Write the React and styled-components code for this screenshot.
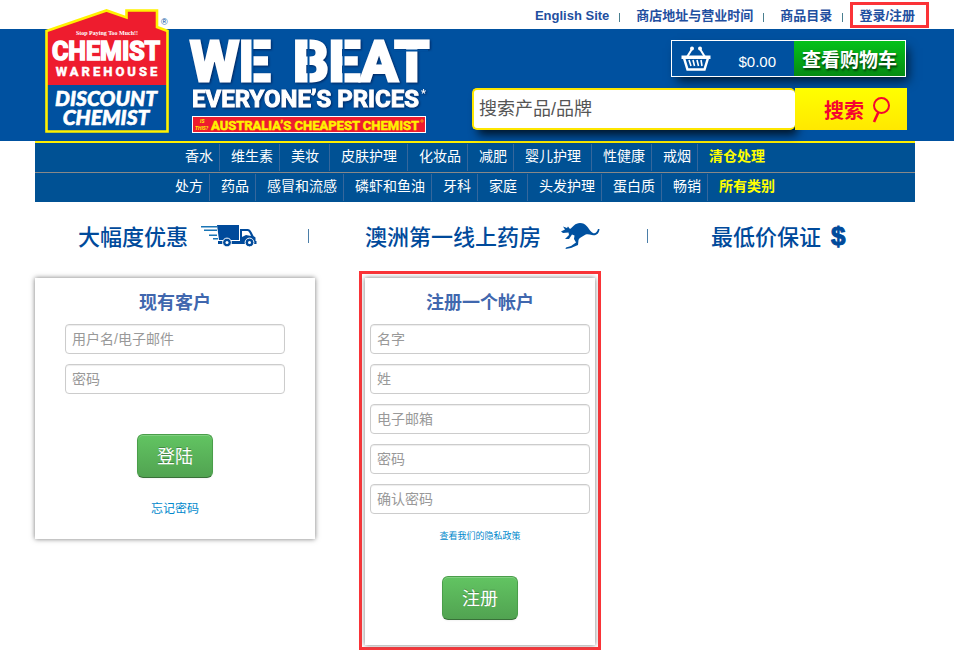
import React, { useState } from "react";
import styled, { createGlobalStyle } from "styled-components";

const GlobalStyle = createGlobalStyle`
    * {
        box-sizing: border-box;
    }

    body {
        margin: 0;
        background: #fff;
        font-family: "Liberation Sans", "Noto Sans CJK SC", sans-serif;
    }

    a {
        text-decoration: none;
    }
`;

/* header */

const Header = styled.header`
    display: flex;
    padding: 0 25px 8px 45px;
    background: linear-gradient(#fff 29px, #0051a0 29px);
`;

const Brand = styled.a`
    display: flex;
    align-items: flex-end;
    flex: none;
    gap: 14px;
    padding-top: 9px;
    margin-right: 39px;

    svg {
        display: block;
    }
`;

const HeaderTools = styled.div`
    flex: 1;
    min-width: 0;
`;

const TopLinks = styled.nav`
    display: flex;
    justify-content: flex-end;
    align-items: center;
    height: 29px;
    white-space: nowrap;
`;

const TopLink = styled.a`
    padding-top: 3px;
    color: #1f4fa0;
    font-size: 13px;
    line-height: 20px;
    font-weight: bold;

    & + &::before {
        content: "";
        display: inline-block;
        width: 1px;
        height: 9px;
        margin: 0 16px -2px 10px;
        background: #4a7f8f;
    }
`;

const LoginLink = styled.a`
    padding: 2px 11px 0 6px;
    border: 3px solid #fb3337;
    color: #1f4fa0;
    font-size: 13px;
    line-height: 18px;
    font-weight: bold;
`;

const Divider = styled.span`
    width: 1px;
    height: 9px;
    margin: 6px 7px 0 10px;
    background: #4a7f8f;
`;

const Cart = styled.div`
    display: flex;
    align-items: center;
    width: 235px;
    height: 37px;
    margin: 11px 23px 11px auto;
    border: 1px solid #fff;
    box-shadow: 4px 6px 10px -2px rgba(0, 0, 0, 0.7);

    svg {
        margin-left: 9px;
    }
`;

const CartTotal = styled.span`
    flex: 1;
    padding: 6px 18px 0 0;
    color: #fff;
    font-size: 15px;
    text-align: right;
`;

const CartButton = styled.button`
    width: 111px;
    height: 35px;
    padding: 0;
    border: none;
    background: linear-gradient(#04c21a, #068b12);
    color: #fff;
    font: bold 19px/33px "Noto Sans CJK SC", sans-serif;
    text-shadow: 1px 2px 2px rgba(0, 0, 0, 0.6);
    cursor: pointer;
`;

const Search = styled.form`
    display: flex;
    height: 42px;
    margin-right: 22px;
`;

const SearchInput = styled.input`
    flex: 1;
    min-width: 0;
    padding: 0 5px;
    border: 2px solid #fee600;
    border-right-width: 0;
    border-radius: 5px;
    background: #fff;
    box-shadow: 4px 7px 10px -2px rgba(0, 0, 0, 0.75);
    color: #555;
    font: 18px "Liberation Sans", "Noto Sans CJK SC", sans-serif;

    &::placeholder {
        color: #555;
        opacity: 1;
    }
`;

const SearchButton = styled.button`
    display: flex;
    align-items: center;
    justify-content: center;
    gap: 8px;
    width: 112px;
    padding: 2px 0 0 12px;
    border: none;
    background: linear-gradient(#ffff00, #ffe800);
    color: #f5052f;
    font: bold 20px/40px "Noto Sans CJK SC", sans-serif;
    cursor: pointer;
`;

/* content column */

const Container = styled.main`
    padding: 0 39px 0 35px;
`;

const Menu = styled.nav`
    border-top: 2px solid #ffee00;
    background: #005194;
`;

const MenuRow = styled.div`
    display: flex;
    justify-content: center;
    height: 29px;
    padding: 1px 0;

    & + & {
        height: 30px;
        border-top: 1px solid #888;
    }
`;

const MenuItem = styled.a`
    padding: 0 ${({ $loose }) => ($loose ? 10 : 6)}px 0 11px;
    border-right: 1px solid #36679c;
    color: #fff;
    font-size: 14px;
    line-height: 25px;
    white-space: nowrap;

    &:last-child {
        padding-right: 11px;
        border-right: none;
        color: #ffff00;
        font-weight: bold;
    }
`;

const Promos = styled.div`
    display: grid;
    grid-template-columns: 273fr 339fr 268fr;
    align-items: center;
    height: 69px;
    padding-bottom: 2px;
`;

const Promo = styled.div`
    display: flex;
    align-items: center;
    gap: 13px;
    height: 26px;
    padding-left: ${({ $indent }) => $indent}px;
    color: #004a9b;
    font: 500 22px/24px "Noto Sans CJK SC", sans-serif;
    white-space: nowrap;

    & + & {
        background: linear-gradient(#4b7ea8, #4b7ea8) left center / 1px 14px no-repeat;
    }
`;

const PromoText = styled.span`
    padding-bottom: 2px;
`;

const Dollar = styled.span`
    margin-left: -3px;
    font: bold 26px/26px "Liberation Sans", sans-serif;
    -webkit-text-stroke: 1px #004a9b;
`;

const Forms = styled.div`
    display: flex;
    align-items: flex-start;
    gap: 44px;
`;

const Highlight = styled.div`
    padding: 4px 3px 2px;
    border: 3px solid #fb3337;
`;

const Card = styled.form`
    display: flex;
    flex-direction: column;
    align-items: center;
    gap: 10px;
    padding: 15px 5px 25px;
    background: #fff;
    box-shadow: 0 0 5px #777;
`;

const LoginCard = styled(Card)`
    margin-top: 7px;
    padding: 15px 30px 19px;
`;

const CardTitle = styled.h2`
    margin: 0;
    color: #4067ae;
    font-size: 18px;
    line-height: 21px;
`;

const Input = styled.input`
    width: 220px;
    height: 30px;
    padding: 0 6px;
    border: 1px solid #ccc;
    border-radius: 4px;
    box-shadow: inset 0 1px 1px rgba(0, 0, 0, 0.075);
    color: #555;
    font: 14px "Liberation Sans", "Noto Sans CJK SC", sans-serif;

    &::placeholder {
        color: #999;
        opacity: 1;
    }
`;

const SubmitButton = styled.button`
    height: 44px;
    margin-top: ${({ $space }) => $space}px;
    padding: 0 19px 2px;
    border: 1px solid #4a9e4a;
    border-bottom-color: #387038;
    border-radius: 6px;
    background: linear-gradient(#62c462, #51a351);
    box-shadow: inset 0 1px 0 rgba(255, 255, 255, 0.2), 0 1px 2px rgba(0, 0, 0, 0.05);
    color: #fff;
    font: 18px "Noto Sans CJK SC", sans-serif;
    text-shadow: 0 -1px 0 rgba(0, 0, 0, 0.25);
    cursor: pointer;
`;

const ForgotLink = styled.a`
    margin-top: 10px;
    color: #0088cc;
    font-size: 12px;
    line-height: 22px;
`;

const PolicyLink = styled.a`
    color: #0088cc;
    font-size: 9px;
    line-height: 24px;
`;

const Logo = () => (
    <svg width="130" height="124" viewBox="45 9 130 124">
        <path d="M46.5 31 L106.5 10.5 L126.5 17.5 V10.5 H157 V27 L167.5 31 V85 H46.5 Z" fill="#ee1c2e" />
        <path d="M46.5 85 H167.5 V131.5 H46.5 Z" fill="#0051a0" />
        <path
            d="M46.5 31 L106.5 10.5 L126.5 17.5 V10.5 H157 V27 L167.5 31 V131.5 H46.5 Z"
            fill="none"
            stroke="#fff200"
            strokeWidth="2.6"
        />
        <g fill="#fff" stroke="#fff" fontWeight="bold" textAnchor="middle">
            <text x="107" y="35" fontSize="6" stroke="none" fontFamily="Liberation Serif, serif">
                Stop Paying Too Much!!
            </text>
            <text x="106" y="60" fontSize="25" strokeWidth="1.6" fontFamily="Roboto, sans-serif">
                CHEMIST
            </text>
            <text x="108" y="76" fontSize="13" strokeWidth="0.5" letterSpacing="3" fontFamily="Roboto, sans-serif">
                WAREHOUSE
            </text>
            <g fontFamily="Lato, sans-serif" fontStyle="italic" fontWeight="900" fontSize="21" strokeWidth="0.6">
                <text x="106" y="106">DISCOUNT</text>
                <text x="106" y="125">CHEMIST</text>
            </g>
        </g>
        <text x="161" y="25" fontSize="9" fill="#0051a0" fontFamily="Liberation Sans, sans-serif">
            ®
        </text>
    </svg>
);

const SloganArt = styled.svg`
    font-family: Roboto, sans-serif;
    font-weight: bold;

    .headline {
        fill: #fff;
        stroke: #fff;
        filter: drop-shadow(1px 1px 1px rgba(0, 20, 70, 0.7));
    }

    .banner {
        fill: #fff200;
    }
`;

const Slogan = () => (
    <SloganArt width="244" height="124" viewBox="189 9 244 124">
        <g className="headline">
            <text x="190" y="81" fontSize="56" strokeWidth="3">WE</text>
            <text x="293" y="81" fontSize="56" strokeWidth="3">BEAT</text>
            <text x="192" y="107" fontSize="24" strokeWidth="1">EVERYONE’S PRICES</text>
            <text x="421" y="97" fontSize="11" stroke="none">*</text>
        </g>
        {/* stencil cuts */}
        <path d="M252.5 36 V84 M308.5 36 V84 M343.5 36 V84 M394 50.5 H428" stroke="#0051a0" strokeWidth="2" />
        <rect x="192.5" y="116.5" width="233" height="16" fill="#ee1c2e" stroke="#fff" />
        <g className="banner">
            <text x="200" y="123" fontSize="5" fontStyle="italic">IS</text>
            <text x="195" y="130" fontSize="5" fontStyle="italic">THIS?</text>
            <text x="211" y="130" fontSize="13" stroke="#fff200" strokeWidth="0.5">
                AUSTRALIA’S CHEAPEST CHEMIST
            </text>
            <circle cx="422" cy="121" r="1.2" fill="none" stroke="#fff200" strokeWidth="0.6" />
        </g>
    </SloganArt>
);

const BasketIcon = () => (
    <svg width="30" height="26" viewBox="0 0 30 26" fill="none" stroke="#fff">
        <path d="M6 11 L11 3 M24 11 L19 3" strokeWidth="2" />
        <circle cx="11" cy="2.5" r="2" fill="#fff" stroke="none" />
        <circle cx="19" cy="2.5" r="2" fill="#fff" stroke="none" />
        <path d="M0.5 9.5 H29.5 V13 H0.5 Z" fill="#fff" stroke="none" />
        <path d="M3 12 L6.5 23.5 H23.5 L27 12" strokeWidth="2.5" />
        <path d="M8 14 L10 20 M12 14 L13.5 20 M16 14 L17.5 20 M20 14 L21 20" strokeWidth="1.6" />
    </svg>
);

const SearchIcon = () => (
    <svg width="18" height="26" viewBox="0 0 18 26" fill="none" stroke="#f5052f">
        <circle cx="9.5" cy="8.5" r="7.5" strokeWidth="2" />
        <path d="M6.5 15 L2 25" strokeWidth="2.6" />
    </svg>
);

const TruckIcon = () => (
    <svg width="56" height="22" viewBox="0 0 56 22" fill="#004a9b">
        <path d="M0 1 H16 V2.5 H0 Z M3 4.5 H16 V6 H3 Z M8 9.5 H16 V11 H8 Z M12 13 H17 V14.5 H12 Z" fill="#1a75b5" />
        <path d="M16 0 H38 V15 H18 Z" />
        <path d="M39 4 H47 Q49 4 50.5 7 L52.5 11 L54.5 12.5 V16 H39 Z" />
        <path d="M41 6 H46.5 Q48 6 50 11 L45 10 L41 12 Z" fill="#fff" />
        <path d="M17 16 H55.5 V19 H17 Z" />
        <g stroke="#fff" strokeWidth="1">
            <circle cx="26" cy="17.5" r="4.4" />
            <circle cx="48.5" cy="17.5" r="4.4" />
        </g>
        <circle cx="26" cy="17.5" r="1.5" fill="#fff" />
        <circle cx="48.5" cy="17.5" r="1.5" fill="#fff" />
    </svg>
);

const KangarooIcon = () => (
    <svg width="46" height="28" viewBox="-7 0 46 28" fill="#0051a0">
        <path d="M0 9.5 L4 7.5 L2 4.5 L6 6 L7 4.5 L9 7 C12 5 14 1 19 1 C25 1 27 6 30 9.5 C33 13 36 11 37 7 L38.5 7 C38 12 35 14 31 13 C27 12 25 12 23 13.5 C20 15.5 18 16 17.5 18 L17 23 L10 26 L4.5 27 L5 25.5 L10 24 L15 20.5 L13 17 L13.5 13.5 L11 12.5 L8 17 L4 17 L8 13 L7.5 10.5 L2 11 Z" />
    </svg>
);

const menuRows = [
    [["香水"], ["维生素"], ["美妆", true], ["皮肤护理", true], ["化妆品"], ["减肥"], ["婴儿护理", true], ["性健康"], ["戒烟"], ["清仓处理"]],
    [["处方"], ["药品"], ["感冒和流感"], ["磷虾和鱼油"], ["牙科"], ["家庭", true], ["头发护理"], ["蛋白质"], ["畅销"], ["所有类别"]],
];

const loginFields = [
    { name: "username", label: "用户名/电子邮件", type: "text" },
    { name: "password", label: "密码", type: "password" },
];

const registerFields = [
    { name: "firstName", label: "名字", type: "text" },
    { name: "lastName", label: "姓", type: "text" },
    { name: "email", label: "电子邮箱", type: "email" },
    { name: "newPassword", label: "密码", type: "password" },
    { name: "confirmPassword", label: "确认密码", type: "password" },
];

const Fields = ({ fields }) => {
    const [values, setValues] = useState({});

    return fields.map(({ name, label, type }) => (
        <Input
            key={name}
            name={name}
            type={type}
            placeholder={label}
            aria-label={label}
            value={values[name] || ""}
            onChange={(e) => setValues({ ...values, [name]: e.target.value })}
        />
    ));
};

const App = () => {
    const handleSubmit = (e) => e.preventDefault();

    return (
        <>
            <GlobalStyle />
            <Header>
                <Brand href="#" aria-label="Chemist Warehouse">
                    <Logo />
                    <Slogan />
                </Brand>
                <HeaderTools>
                    <TopLinks>
                        <TopLink href="#">English Site</TopLink>
                        <TopLink href="#">商店地址与营业时间</TopLink>
                        <TopLink href="#">商品目录</TopLink>
                        <Divider />
                        <LoginLink href="#">登录/注册</LoginLink>
                    </TopLinks>
                    <Cart>
                        <BasketIcon />
                        <CartTotal>$0.00</CartTotal>
                        <CartButton type="button">查看购物车</CartButton>
                    </Cart>
                    <Search onSubmit={handleSubmit}>
                        <SearchInput type="text" placeholder="搜索产品/品牌" aria-label="搜索产品/品牌" />
                        <SearchButton type="submit">
                            搜索
                            <SearchIcon />
                        </SearchButton>
                    </Search>
                </HeaderTools>
            </Header>
            <Container>
                <Menu>
                    {menuRows.map((row, i) => (
                        <MenuRow key={i}>
                            {row.map(([label, loose]) => (
                                <MenuItem key={label} href="#" $loose={loose}>
                                    {label}
                                </MenuItem>
                            ))}
                        </MenuRow>
                    ))}
                </Menu>
                <Promos>
                    <Promo $indent={43}>
                        <PromoText>大幅度优惠</PromoText>
                        <TruckIcon />
                    </Promo>
                    <Promo $indent={57}>
                        <PromoText>澳洲第一线上药房</PromoText>
                        <KangarooIcon />
                    </Promo>
                    <Promo $indent={64}>
                        <PromoText>最低价保证</PromoText>
                        <Dollar>$</Dollar>
                    </Promo>
                </Promos>
                <Forms>
                    <LoginCard onSubmit={handleSubmit}>
                        <CardTitle>现有客户</CardTitle>
                        <Fields fields={loginFields} />
                        <SubmitButton type="submit" $space={30}>登陆</SubmitButton>
                        <ForgotLink href="#">忘记密码</ForgotLink>
                    </LoginCard>
                    <Highlight>
                        <Card onSubmit={handleSubmit}>
                            <CardTitle>注册一个帐户</CardTitle>
                            <Fields fields={registerFields} />
                            <PolicyLink href="#">查看我们的隐私政策</PolicyLink>
                            <SubmitButton type="submit" $space={18}>注册</SubmitButton>
                        </Card>
                    </Highlight>
                </Forms>
            </Container>
        </>
    );
};

export default App;
